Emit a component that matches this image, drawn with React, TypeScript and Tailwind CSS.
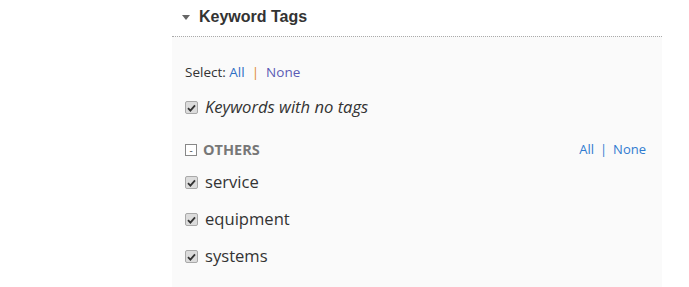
import React from "react";

const Check = () => (
  <span className="flex h-[13px] w-[13px] items-center justify-center rounded-[2px] border border-[#a9a9a9] bg-[#dcdcdc]">
    <svg width="9" height="8" viewBox="0 0 9 8">
      <path d="M1 4.2 L3.4 6.6 L8 1.4" fill="none" stroke="#333" strokeWidth="1.8" />
    </svg>
  </span>
);

const items = ["service", "equipment", "systems"];

export default function App() {
  return (
    <div className="h-[287px] w-[689px] bg-white font-['Open_Sans',sans-serif]">
      <div className="ml-[172px] flex h-full w-[490px] flex-col">
        <div className="flex h-[36px] items-center gap-[9px] pl-[10px] pb-[2px] font-['Liberation_Sans',Arial,sans-serif] text-[16px] font-bold text-[#333]">
          <span className="h-0 w-0 border-x-[4px] border-t-[5px] border-x-transparent border-t-[#666]" />
          Keyword Tags
        </div>
        <div className="flex-1 border-t border-dotted border-[#aaa] bg-[#fafafa] pl-[13px] pr-[16px]">
          <div className="mt-[25px] flex items-center text-[13.5px] text-[#333]">
            Select:&nbsp;
            <span className="text-[#2f6fc4]">All</span>
            <span className="mx-[7px] text-[#e08a2c]">|</span>
            <span className="text-[#5a5ab5]">None</span>
          </div>
          <div className="mt-[13px] flex items-center gap-[7px] text-[16.6px] italic text-[#333]">
            <Check />
            Keywords with no tags
          </div>
          <div className="mt-[19px] flex items-center justify-between">
            <div className="flex items-center gap-[6px]">
              <span className="flex h-[12px] w-[12px] items-center justify-center border border-[#888] bg-white text-[10px] leading-none text-[#555]">
                -
              </span>
              <span className="text-[14.5px] font-bold text-[#777]">OTHERS</span>
            </div>
            <div className="flex items-center text-[13px] text-[#2f7ad0]">
              All
              <span className="mx-[6px]">|</span>
              None
            </div>
          </div>
          <div className="mt-[11px] flex flex-col gap-[15px]">
            {items.map((t) => (
              <div key={t} className="flex h-[22px] items-center gap-[7px] text-[16.6px] text-[#333]">
                <Check />
                {t}
              </div>
            ))}
          </div>
        </div>
      </div>
    </div>
  );
}
